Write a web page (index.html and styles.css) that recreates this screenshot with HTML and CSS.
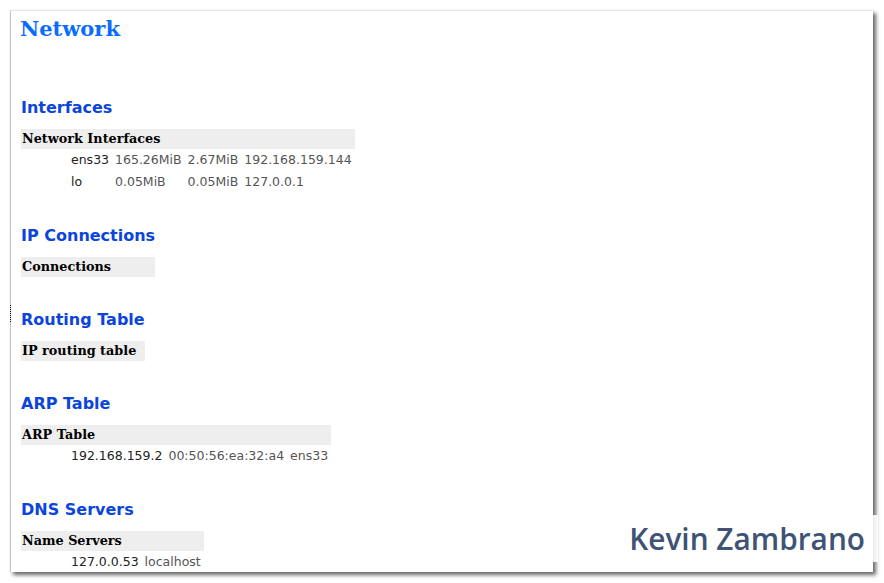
FILE: index.html
```html
<!DOCTYPE html>
<html>
<head>
<meta charset="utf-8">
<link rel="stylesheet" href="styles.css">
</head>
<body>
<div class="window">
  <h1 class="title">Network</h1>

  <section class="section">
    <h2 class="heading">Interfaces</h2>
    <table class="info">
      <tr><th colspan="4">Network Interfaces</th></tr>
      <tr><td class="key">ens33</td><td>165.26MiB</td><td>2.67MiB</td><td>192.168.159.144</td></tr>
      <tr><td class="key">lo</td><td>0.05MiB</td><td>0.05MiB</td><td>127.0.0.1</td></tr>
    </table>
  </section>

  <section class="section">
    <h2 class="heading">IP Connections</h2>
    <table class="info info-connections">
      <tr><th>Connections</th></tr>
    </table>
  </section>

  <section class="section">
    <h2 class="heading">Routing Table</h2>
    <table class="info info-routing">
      <tr><th>IP routing table</th></tr>
    </table>
  </section>

  <section class="section">
    <h2 class="heading">ARP Table</h2>
    <table class="info">
      <tr><th colspan="3">ARP Table</th></tr>
      <tr><td class="key">192.168.159.2</td><td>00:50:56:ea:32:a4</td><td>ens33</td></tr>
    </table>
  </section>

  <section class="section">
    <h2 class="heading">DNS Servers</h2>
    <table class="info">
      <tr><th colspan="2">Name Servers</th></tr>
      <tr><td class="key">127.0.0.53</td><td>localhost</td></tr>
    </table>
  </section>
</div>
<div class="cursor-mark"></div>
<div class="watermark">Kevin Zambrano</div>
</body>
</html>
```

FILE: styles.css
```css
html, body {
  margin: 0;
  background: #ffffff;
}

body {
  padding: 10px;
  width: 884px;
  height: 583px;
  box-sizing: border-box;
  position: relative;
  overflow: hidden;
}

.window {
  width: 863px;
  height: 562px;
  box-sizing: border-box;
  background: #ffffff;
  border-left: 1px solid #c4c4c4;
  border-top: 1px solid #e6e6e6;
  box-shadow: 3px 3px 4px rgba(0, 0, 0, 0.6);
  padding: 6px 10px 0 10px;
  overflow: hidden;
}

.title {
  margin: 0 0 56.5px -1px;
  font-family: "DejaVu Serif", serif;
  font-weight: bold;
  font-size: 21px;
  line-height: 24px;
  color: #0a6cff;
}

.section {
  margin-top: 33px;
}

.heading {
  margin: 0 0 11.5px 0;
  font-family: "DejaVu Sans", sans-serif;
  font-weight: bold;
  font-size: 16px;
  line-height: 20px;
  color: #0b45d9;
}

.info {
  border-collapse: collapse;
  border-spacing: 0;
}

.info th {
  background: #eeeeee;
  text-align: left;
  padding: 0 0 0 1px;
  font-family: "DejaVu Serif", serif;
  font-weight: bold;
  font-size: 12.8px;
  line-height: 19.5px;
  color: #000000;
}

.info-connections {
  width: 134px;
}

.info-routing {
  width: 124px;
}

.info td {
  padding: 0 3px;
  font-family: "DejaVu Sans", sans-serif;
  font-size: 12.5px;
  line-height: 22px;
  color: #555555;
  white-space: nowrap;
}

.info td.key {
  padding-left: 50px;
  color: #222222;
}

.cursor-mark {
  position: absolute;
  left: 10px;
  top: 305px;
  height: 17px;
  border-left: 1px dotted #222222;
}

.watermark {
  position: absolute;
  right: 6px;
  top: 515px;
  height: 47px;
  padding: 0 13px 0 12px;
  background: rgba(255, 255, 255, 0.88);
  font-family: "Open Sans", "Noto Sans", sans-serif;
  font-weight: 600;
  font-size: 29.8px;
  line-height: 47px;
  color: #3e5375;
}
```
